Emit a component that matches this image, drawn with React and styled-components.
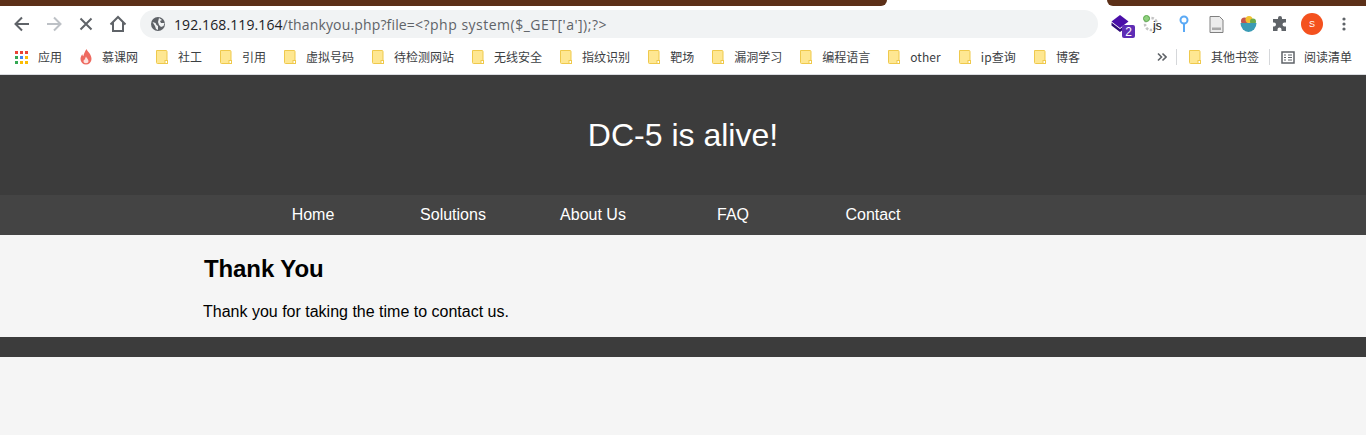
import React from "react"
import styled, { createGlobalStyle } from "styled-components"

const GlobalStyle = createGlobalStyle`
  html, body {
    margin: 0;
    padding: 0;
    background: #f5f5f5;
  }
  body {
    font-family: "Liberation Sans", Arial, sans-serif;
    height: 435px;
    overflow: hidden;
  }
`

const Browser = styled.div`
  background: #ffffff;
  height: 75px;
  box-sizing: border-box;
  border-bottom: 1px solid #dadce0;
`
const TabStrip = styled.div`
  display: flex;
  height: 6px;
  justify-content: space-between;
`
const TabEdge = styled.div`
  background: #5c3018;
  width: ${(props) => props.$width}px;
  border-bottom-left-radius: ${(props) => (props.$side === "right" ? "6px" : "0")};
  border-bottom-right-radius: ${(props) => (props.$side === "left" ? "6px" : "0")};
`
const Toolbar = styled.div`
  display: flex;
  align-items: center;
  height: 34px;
  padding-top: 2px;
  box-sizing: border-box;
`
const NavButtons = styled.div`
  display: flex;
  align-items: center;
  gap: 12px;
  padding-left: 12px;
  width: 140px;
  box-sizing: border-box;
`
const NavIcon = styled.svg`
  width: 20px;
  height: 20px;
  flex: none;
  fill: none;
  stroke: ${(props) => props.$color || "#5f6368"};
  stroke-width: 2;
`
const Omnibox = styled.div`
  display: flex;
  align-items: center;
  width: 958px;
  height: 28px;
  border-radius: 14px;
  background: #f1f3f4;
  box-sizing: border-box;
  padding-left: 11px;
  flex: none;
`
const UrlText = styled.div`
  margin-left: 9px;
  font-family: "Open Sans", "Liberation Sans", sans-serif;
  font-size: 14px;
  color: #5f6368;
  white-space: pre;
`
const UrlPart = styled.span`
  color: ${(props) => props.$color || "inherit"};
  letter-spacing: ${(props) => props.$spacing}px;
`
const Extensions = styled.div`
  display: flex;
  align-items: center;
  height: 100%;
  margin-left: 6px;
`
const ExtSlot = styled.div`
  position: relative;
  width: 32px;
  display: flex;
  justify-content: center;
  align-items: center;
  flex: none;
`
const CountBadge = styled.span`
  position: absolute;
  left: 18px;
  top: 10px;
  width: 13px;
  height: 13px;
  background: #5e2db5;
  border-radius: 2px;
  color: #ffffff;
  font-size: 12px;
  line-height: 14px;
  text-align: center;
`
const JsMark = styled.span`
  position: absolute;
  left: 17px;
  top: 4px;
  font-size: 12px;
  line-height: 14px;
  color: #222222;
`
const Avatar = styled.div`
  width: 22px;
  height: 22px;
  border-radius: 50%;
  background: #f4511e;
  color: #ffffff;
  font-size: 9px;
  line-height: 22px;
  text-align: center;
`
const Bookmarks = styled.div`
  display: flex;
  align-items: center;
  height: 34px;
  padding-left: 15px;
  font-family: "Noto Sans CJK SC", "Liberation Sans", sans-serif;
  font-size: 12px;
  color: #3c4043;
`
const Mark = styled.div`
  display: flex;
  align-items: center;
  gap: ${(props) => props.$gap || 10}px;
  margin-right: ${(props) => props.$after ?? 18}px;
  white-space: nowrap;
  flex: none;
`
const MarkLabel = styled.span`
  line-height: 16px;
  letter-spacing: ${(props) => (props.$latin ? "0.1px" : "normal")};
`
const Separator = styled.div`
  width: 1px;
  height: 16px;
  background: #d5d7da;
  margin-right: ${(props) => props.$after}px;
  flex: none;
`
const Chevrons = styled.svg`
  width: 10px;
  height: 10px;
  fill: none;
  stroke: #5f6368;
  stroke-width: 1.6;
  margin-left: 59px;
  margin-right: 9px;
  flex: none;
`
const Banner = styled.header`
  height: 120px;
  background: #3c3c3c;
  color: #ffffff;
  font-size: 32px;
  display: flex;
  align-items: center;
  justify-content: center;
`
const Menu = styled.nav`
  height: 40px;
  background: #444444;
`
const Wrapper = styled.div`
  width: 960px;
  margin-left: 203px;
  box-sizing: border-box;
`
const MenuList = styled(Wrapper)`
  display: flex;
  padding-left: 40px;
`
const MenuItem = styled.a`
  width: 140px;
  line-height: 39px;
  text-align: center;
  color: #ffffff;
  font-size: 16px;
`
const Content = styled.main`
  height: 102px;
  background: #f5f5f5;
  box-sizing: border-box;
  padding-top: 20px;
`
const Title = styled.h2`
  margin: 0 0 0 1px;
  font-size: 24px;
  line-height: 27px;
  letter-spacing: -0.1px;
  color: #000000;
`
const Message = styled.p`
  margin: 21px 0 0;
  font-size: 16px;
  line-height: 18px;
  color: #000000;
`
const Footer = styled.footer`
  height: 20px;
  background: #3c3c3c;
`
const IconSvg = styled.svg`
  flex: none;
  display: block;
`

const Folder = () => (
  <IconSvg width="12" height="14" viewBox="0 0 12 14">
    <path d="M.5.5h9.500a1 1 0 0 1 1 1v12H1.500a1 1 0 0 1-1-1z" fill="#fee792" stroke="#efc94c" />
    <rect x="9" y="10.500" width="2.500" height="3" fill="#fff" stroke="#efc94c" />
  </IconSvg>
)

const gridColors = ["#ea4335", "#ea4335", "#ea4335", "#34a853", "#4285f4", "#fbbc04", "#34a853", "#fbbc04", "#fbbc04"]

const AppsGrid = () => (
  <IconSvg width="13" height="13" viewBox="0 0 13 13">
    {gridColors.map((c, i) => (
      <rect key={i} x={(i % 3) * 5} y={Math.floor(i / 3) * 5} width="3" height="3" fill={c} />
    ))}
  </IconSvg>
)

const Flame = () => (
  <IconSvg width="12" height="16" viewBox="0 0 12 16">
    <path d="M6.500 0c.8 2.500 5 5 5 10a5.500 5.500 0 0 1-11 0c0-2 .8-3.500 1.800-4.800.2 1 .5 1.600 1 2C3.800 5 5 2.500 6.500 0z" fill="#ee6a60" />
    <path d="M6 7.500c.6 1.500 2.500 3 2.500 4.800 0 1.200-1 2-2.500 2s-2.500-.8-2.500-2c0-.8.400-1.500.900-2 .2.400.4.600.7.700C4.900 9.800 5.400 8.700 6 7.500z" fill="#fde3e0" />
  </IconSvg>
)

const bookmarks = [
  { name: "社工" },
  { name: "引用" },
  { name: "虚拟号码" },
  { name: "待检测网站" },
  { name: "无线安全" },
  { name: "指纹识别" },
  { name: "靶场" },
  { name: "漏洞学习" },
  { name: "编程语言" },
  { name: "other", latin: true },
  { name: "ip查询", latin: true },
  { name: "博客" },
]

const App = () => {
  return (
    <React.Fragment>
      <GlobalStyle />
      <Browser>
        <TabStrip>
          <TabEdge $width={887} $side="left" />
          <TabEdge $width={259} $side="right" />
        </TabStrip>
        <Toolbar>
          <NavButtons>
            <NavIcon viewBox="0 0 20 20"><path d="M17 10H4M10 3.500L3.500 10l6.500 6.500" /></NavIcon>
            <NavIcon viewBox="0 0 20 20" $color="#bdc1c6"><path d="M3 10h13M10 3.500l6.500 6.500-6.500 6.500" /></NavIcon>
            <NavIcon viewBox="0 0 20 20"><path d="M4.500 4.500l11 11M15.500 4.500l-11 11" /></NavIcon>
            <NavIcon viewBox="0 0 20 20"><path d="M2.500 10.500L10 3l7.500 7.500M5 8.500V17h10V8.500" /></NavIcon>
          </NavButtons>
          <Omnibox>
            <IconSvg width="14" height="14" viewBox="0 0 14 14">
              <circle cx="7" cy="7" r="7" fill="#5f6368" />
              <path d="M1.500 5l3 1 1 2 1.500 1v4l-2-1-1-3zM8 1l3 2-2 1 1 2h3.500l-1 3-2.500 1-2-2-1-3z" fill="#f1f3f4" />
            </IconSvg>
            <UrlText>
              <UrlPart $color="#202124" $spacing={0.1}>192.168.119.164</UrlPart>
              <UrlPart $spacing={0.15}>/thankyou.php?file=</UrlPart>
              <UrlPart $spacing={0.5}>&lt;?php system($_GET['a']);?&gt;</UrlPart>
            </UrlText>
          </Omnibox>
          <Extensions>
            <ExtSlot>
              <IconSvg width="20" height="18" viewBox="0 0 20 18">
                <path d="M10 0l8.500 6.500-8.500 6.500L1.500 6.500z" fill="#4a0fa8" />
                <path d="M1.500 7.500l8.500 6.500 4-3v3l-4 3-8.500-6.500z" fill="#2f0a78" />
              </IconSvg>
              <CountBadge>2</CountBadge>
            </ExtSlot>
            <ExtSlot>
              <IconSvg width="18" height="18" viewBox="0 0 18 18">
                <circle cx="8" cy="9" r="6" fill="none" stroke="#c4c4c4" strokeWidth="2.500" strokeDasharray="2.500 1.500" />
                <circle cx="3.500" cy="3.500" r="3" fill="#8fd07f" stroke="#5aa84a" />
              </IconSvg>
              <JsMark>js</JsMark>
            </ExtSlot>
            <ExtSlot>
              <IconSvg width="12" height="18" viewBox="0 0 12 18" fill="none" stroke="#5aa9f5" strokeWidth="2">
                <circle cx="6" cy="5" r="3.500" />
                <path d="M6 8.500V17" />
              </IconSvg>
            </ExtSlot>
            <ExtSlot>
              <IconSvg width="15" height="17" viewBox="0 0 15 17">
                <path d="M1 .5h9.500L14 4v12.500H1z" fill="#ececec" stroke="#808080" />
                <rect x="3" y="11.500" width="9" height="2.500" fill="#a8a8a8" />
              </IconSvg>
            </ExtSlot>
            <ExtSlot>
              <IconSvg width="17" height="17" viewBox="0 0 17 17">
                <circle cx="4.500" cy="5" r="3.500" fill="#c2554d" />
                <circle cx="9" cy="3.500" r="3.500" fill="#f2c230" />
                <circle cx="13" cy="5.500" r="3" fill="#6cab4c" />
                <path d="M.5 7h16a8 9 0 0 1-16 0z" fill="#3a9bb5" />
              </IconSvg>
            </ExtSlot>
            <ExtSlot>
              <IconSvg width="16" height="16" viewBox="0 0 16 16">
                <path d="M6 2a2 2 0 0 1 4 0v1h4v3.500h-1.500a2 2 0 0 0 0 4H14V15H9.500v-1.500a2 2 0 0 0-4 0V15H1v-4.500h1a2 2 0 0 0 0-4H1V3h5z" fill="#5f6368" />
              </IconSvg>
            </ExtSlot>
            <ExtSlot>
              <Avatar>S</Avatar>
            </ExtSlot>
            <ExtSlot>
              <IconSvg width="4" height="14" viewBox="0 0 4 14" fill="#5f6368">
                <circle cx="2" cy="2" r="1.600" />
                <circle cx="2" cy="7" r="1.600" />
                <circle cx="2" cy="12" r="1.600" />
              </IconSvg>
            </ExtSlot>
          </Extensions>
        </Toolbar>
        <Bookmarks>
          <Mark $gap={10}><AppsGrid /><MarkLabel>应用</MarkLabel></Mark>
          <Mark $gap={10}><Flame /><MarkLabel>慕课网</MarkLabel></Mark>
          {bookmarks.map((item) => (
            <Mark key={item.name}><Folder /><MarkLabel $latin={item.latin}>{item.name}</MarkLabel></Mark>
          ))}
          <Chevrons viewBox="0 0 10 10">
            <path d="M1 1.500L4.500 5 1 8.500M5.500 1.500L9 5 5.500 8.500" />
          </Chevrons>
          <Separator $after={12} />
          <Mark $after={10}><Folder /><MarkLabel>其他书签</MarkLabel></Mark>
          <Separator $after={11} />
          <Mark $gap={9} $after={0}>
            <IconSvg width="14" height="13" viewBox="0 0 14 13" fill="none" stroke="#5f6368">
              <rect x="1" y="1" width="12" height="11" strokeWidth="1.500" />
              <path d="M3 4h2M7 4h4M3 6.500h2M7 6.500h4M3 9h2M7 9h4" />
            </IconSvg>
            <MarkLabel>阅读清单</MarkLabel>
          </Mark>
        </Bookmarks>
      </Browser>
      <Banner>DC-5 is alive!</Banner>
      <Menu>
        <MenuList>
          <MenuItem>Home</MenuItem>
          <MenuItem>Solutions</MenuItem>
          <MenuItem>About Us</MenuItem>
          <MenuItem>FAQ</MenuItem>
          <MenuItem>Contact</MenuItem>
        </MenuList>
      </Menu>
      <Content>
        <Wrapper>
          <Title>Thank You</Title>
          <Message>Thank you for taking the time to contact us.</Message>
        </Wrapper>
      </Content>
      <Footer />
    </React.Fragment>
  )
}

export default App
